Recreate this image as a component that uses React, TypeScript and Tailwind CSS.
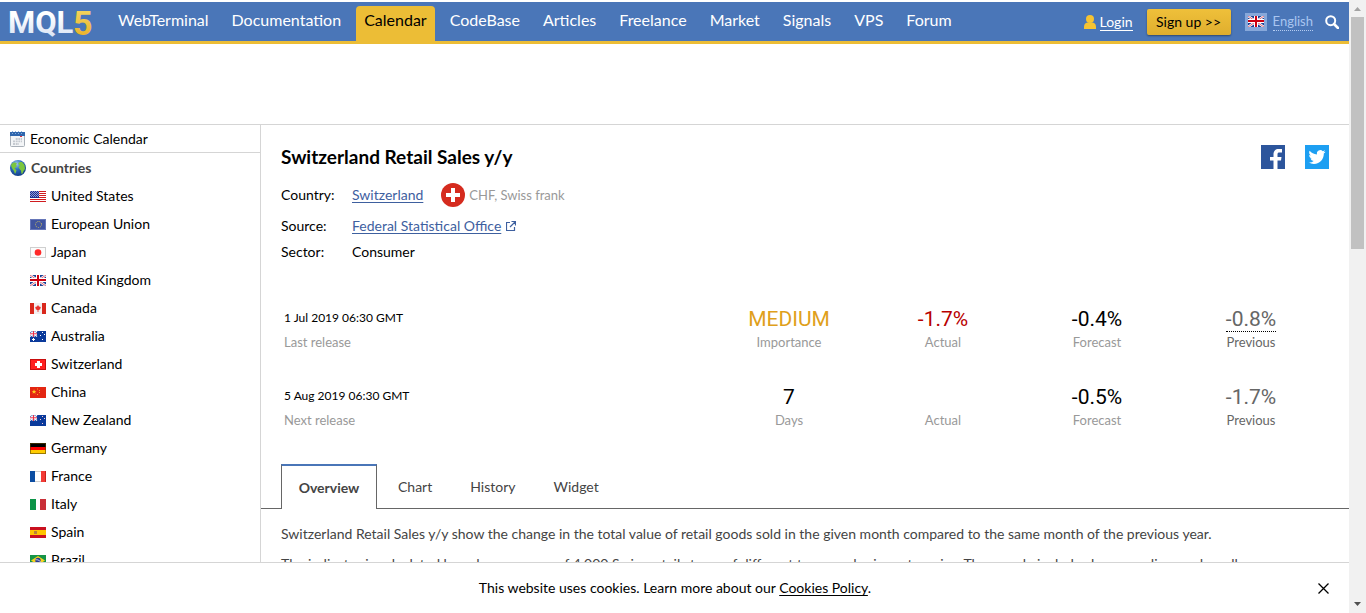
import type { ReactNode } from "react";

function UnionJack() {
  return (
    <>
      <rect width="16" height="11" fill="#1c3f94" />
      <path d="M0 0L16 11M16 0L0 11" stroke="#fff" strokeWidth="2.4" />
      <path d="M0 0L16 11M16 0L0 11" stroke="#d8283a" strokeWidth=".7" />
      <path d="M6 0h4v11H6zM0 3h16v4H0z" fill="#fff" />
      <path d="M7 0h2v11H7zM0 4h16v2H0z" fill="#cc0011" />
    </>
  );
}

function SouthernFlag({ star }: { star: string }) {
  return (
    <>
      <rect width="16" height="11" fill="#0a3a9b" />
      <path d="M0 0L7 5.5M7 0L0 5.5" stroke="#fff" strokeWidth="1.2" />
      <path d="M3.5 0V6M0 2.8H7" stroke="#fff" strokeWidth="2.2" />
      <path d="M3.5 0V6M0 2.8H7" stroke="#e8304a" strokeWidth="1" />
      <path d="M12 1h1v1h-1zM10 4h1v1h-1zM14 3h1v1h-1zM12 8h1v1h-1z" fill={star} />
      {star === "#ffffff" && <path d="M3 7h1v1h1v1h-1v1h-1v-1h-1v-1h1z" fill="#fff" />}
    </>
  );
}

const flags: Record<string, ReactNode> = {
  "United States": (
    <>
      <rect width="16" height="11" fill="#fff" />
      <path d="M0 .5H16M0 2.5H16M0 4.5H16M0 6.5H16M0 8.5H16M0 10.5H16" stroke="#d01c1f" />
      <rect width="9" height="7" fill="#1d2f8f" />
      <path d="M0 .5H9M1 1.5H9M0 2.5H9M1 3.5H9M0 4.5H9M1 5.5H9" stroke="#8f9ad6" strokeDasharray="1 1" />
    </>
  ),
  "European Union": (
    <>
      <rect width="16" height="11" fill="#40549f" />
      <rect x=".5" y=".5" width="15" height="10" fill="none" stroke="#6676b8" />
      <circle cx="8.5" cy="5.5" r="3" fill="none" stroke="#d8c85a" strokeDasharray="1 1.1" />
    </>
  ),
  Japan: (
    <>
      <rect x=".5" y=".5" width="15" height="10" fill="#fcfcfc" stroke="#cfcfcf" />
      <circle cx="8" cy="5.5" r="3.3" fill="#ff2a2a" />
    </>
  ),
  "United Kingdom": <UnionJack />,
  Canada: (
    <>
      <rect width="16" height="11" fill="#f3f0f0" />
      <path d="M0 0H4V11H0zM12 0H16V11H12z" fill="#d9281c" />
      <path d="M8 2l1 1.5 1.8.5-.6 2.2L8.4 7.2V9h-.8V7.2L5.8 6.2 5.2 4 7 3.5z" fill="#e8322d" />
    </>
  ),
  Australia: <SouthernFlag star="#ffffff" />,
  Switzerland: (
    <>
      <rect x=".5" y=".5" width="15" height="10" fill="#ff2020" stroke="#c80d0d" />
      <path d="M7 2h3v2h2v3h-2v2h-3v-2h-2v-3h2z" fill="#fff" />
    </>
  ),
  China: (
    <>
      <rect width="16" height="11" fill="#e32612" />
      <path d="M4 2.3L4.7 4h1.6L5.1 5l.5 1.7L4 5.7 2.5 6.7 3 5 1.8 4h1.6z" fill="#ffc81e" />
      <path d="M7 1.5h1v1h-1zM9 3h1v1h-1zM9 5h1v1h-1zM7 7h1v1h-1z" fill="#f6a61c" />
    </>
  ),
  "New Zealand": <SouthernFlag star="#ffc9d0" />,
  Germany: (
    <>
      <rect width="16" height="4" fill="#000" />
      <rect y="4" width="16" height="3" fill="#fb0000" />
      <rect y="7" width="16" height="4" fill="#ffcc00" />
      <rect x=".5" y=".5" width="15" height="10" fill="none" stroke="#5a4200" strokeOpacity=".6" />
    </>
  ),
  France: (
    <>
      <rect width="16" height="11" fill="#fff" />
      <path d="M5 .5H11M5 10.5H11" stroke="#cfcfcf" />
      <rect width="5" height="11" fill="#0c4da2" />
      <rect x="11" width="5" height="11" fill="#f23a35" />
      <path d="M15.5 0V11" stroke="#c8211d" />
    </>
  ),
  Italy: (
    <>
      <rect width="16" height="11" fill="#fff" />
      <rect width="6" height="11" fill="#0c9447" />
      <rect x="10" width="6" height="11" fill="#c92f38" />
    </>
  ),
  Spain: (
    <>
      <rect width="16" height="11" fill="#c9101f" />
      <rect y="3" width="16" height="5" fill="#ffc400" />
      <path d="M4 4h3v3h-3z" fill="#b7803a" />
    </>
  ),
  Brazil: (
    <>
      <rect width="16" height="11" fill="#159447" />
      <path d="M8 1L15 5.5 8 10 1 5.5z" fill="#f8d21c" />
      <circle cx="8" cy="5.5" r="2.7" fill="#2b3a8c" />
      <path d="M5.5 4.7Q8 4.2 10.5 6.5" fill="none" stroke="#fff" strokeWidth=".7" />
    </>
  ),
};

function Flag({ name }: { name: string }) {
  return (
    <svg viewBox="0 0 16 11" className="h-[11px] w-4 shrink-0" aria-hidden="true">
      {flags[name]}
    </svg>
  );
}

function Logo() {
  return (
    <svg viewBox="0 0 84 39" className="h-[39px] w-[84px] overflow-visible" role="img" aria-label="MQL5">
      <defs>
        <linearGradient id="silver" x1="0" y1="0" x2="0" y2="1">
          <stop offset=".3" stopColor="#ffffff" />
          <stop offset="1" stopColor="#d3dff2" />
        </linearGradient>
        <linearGradient id="gold" x1="0" y1="0" x2="0" y2="1">
          <stop offset=".2" stopColor="#f3d35c" />
          <stop offset="1" stopColor="#e9a91c" />
        </linearGradient>
      </defs>
      <g fontFamily="Roboto, sans-serif" fontWeight="700">
        <text x="-1" y="31" fill="url(#silver)" fontSize="31">
          MQL
        </text>
        <text x="64" y="33" fill="url(#gold)" fontSize="34">
          5
        </text>
      </g>
    </svg>
  );
}

const navItems = [
  "WebTerminal",
  "Documentation",
  "Calendar",
  "CodeBase",
  "Articles",
  "Freelance",
  "Market",
  "Signals",
  "VPS",
  "Forum",
];

function Header() {
  return (
    <header className="mt-0.5 flex h-[42px] shrink-0 items-stretch border-b-[3px] border-[#ecbd36] bg-[#4a76b8]">
      <a href="#home" className="ml-[9px] flex items-center">
        <Logo />
      </a>
      <nav className="flex items-end gap-[7px] pl-[17px]">
        {navItems.map((item) => (
          <a
            key={item}
            href={`#${item}`}
            className={
              item === "Calendar"
                ? "h-[35px] rounded-t-sm bg-[#ecbd36] px-2 text-base leading-7 text-black"
                : "h-[35px] px-2 text-base leading-7 text-white"
            }
          >
            {item}
          </a>
        ))}
      </nav>
      <div className="ml-auto flex items-center pr-[10px] text-sm">
        <svg viewBox="0 0 12 14" className="mr-1 h-[14px] w-3 fill-[#f7c331]" aria-hidden="true">
          <circle cx="6" cy="4" r="4" />
          <path d="M0 14v-2.5C0 9 2 7.5 4 7.5h4c2 0 4 1.5 4 4V14z" />
        </svg>
        <a href="#login" className="border-b border-white leading-[17px] text-white">
          Login
        </a>
        <button className="mx-[14px] h-[26px] w-[84px] rounded-xs bg-linear-to-b from-[#efc03a] to-[#dfae2e] text-black shadow-[0_1px_2px_rgba(0,0,0,0.4)]">
          Sign up &gt;&gt;
        </button>
        <span className="mr-[6px] flex h-[18px] w-[22px] items-center justify-center bg-[#87a8da]">
          <Flag name="United Kingdom" />
        </span>
        <button className="border-b border-dotted border-[#b5cdf2] text-[13px] leading-[17px] text-[#a9c5f0]">
          English
        </button>
        <button aria-label="Search" className="ml-[12px]">
          <svg viewBox="0 0 14 14" className="size-[14px] fill-none stroke-white" aria-hidden="true">
            <circle cx="5.7" cy="5.7" r="4.5" strokeWidth="2" />
            <path d="M9 9l4 4" strokeWidth="2.6" strokeLinecap="round" />
          </svg>
        </button>
      </div>
    </header>
  );
}

function CalendarIcon() {
  return (
    <svg viewBox="0 0 15 16" className="h-4 w-[15px]" aria-hidden="true">
      <rect x=".5" y="2.5" width="14" height="13" rx="1" fill="#f3f5f7" stroke="#a9b0b8" />
      <path d="M0 1h15v4H0z" fill="#2f66ad" />
      <path d="M2.5 0V3M5.5 0V3M8.5 0V3M11.5 0V3" stroke="#8ab0de" strokeDasharray="1 1" />
      <rect x="10" y="5" width="2" height="1" fill="#e03040" />
      <path d="M5 7h7v2h-7zM3 9.5h9v1.7h-9zM3 12h6v2h-6z" fill="#c5cad0" />
      <path d="M5.5 7v7M8 7v7M10.5 7v5" stroke="#f3f5f7" strokeWidth=".7" />
    </svg>
  );
}

function GlobeIcon() {
  return (
    <svg viewBox="0 0 16 16" className="size-4" aria-hidden="true">
      <defs>
        <radialGradient id="sea" cx=".4" cy=".25" r=".75">
          <stop offset="0" stopColor="#a6cdee" />
          <stop offset=".45" stopColor="#2f70c0" />
          <stop offset="1" stopColor="#123e88" />
        </radialGradient>
      </defs>
      <circle cx="8" cy="8" r="8" fill="url(#sea)" />
      <path
        d="M1 5C2 3 3.500 2.500 5 2.500L7 3.500 6 5 7 6 5.500 7.500 4.500 8.500 6.500 10 6 12 5 14 4 11 2.500 9 1.500 7zM8 4l1.500-2L12 2l2.500 3 .5 4-1.500 2-1 2.500L11.500 14 11 10.500 9.500 9 8.500 7 10 5.500z"
        fill="#7cc63e"
      />
    </svg>
  );
}

function Sidebar() {
  return (
    <aside className="w-[261px] shrink-0 border-r border-[#d5d5d5] text-sm text-black">
      <a href="#calendar" className="flex h-7 items-center gap-[5px] border-b border-[#d5d5d5] pl-[10px]">
        <CalendarIcon />
        Economic Calendar
      </a>
      <h2 className="flex h-[29px] items-center gap-[5px] pl-[10px] font-bold text-[#444]">
        <GlobeIcon />
        Countries
      </h2>
      <ul>
        {Object.keys(flags).map((name) => (
          <li key={name}>
            <a href={`#${name}`} className="flex h-7 items-center gap-[5px] pl-[30px]">
              <Flag name={name} />
              {name}
            </a>
          </li>
        ))}
      </ul>
    </aside>
  );
}

function SocialLinks() {
  return (
    <div className="flex gap-5">
      <a href="#facebook" aria-label="Share on Facebook">
        <svg viewBox="0 0 24 24" className="size-6" aria-hidden="true">
          <rect width="24" height="24" fill="#2c559c" />
          <path
            d="M12.5 24v-8.5H9V12h3.5V9.5C12.5 6 14.5 4 17.5 4H21v3.5h-2.5C17 7.5 16.5 8 16.5 9.5V12h4l-.5 3.5h-3.5V24z"
            fill="#fff"
          />
        </svg>
      </a>
      <a href="#twitter" aria-label="Share on Twitter">
        <svg viewBox="0 0 24 24" className="size-6" aria-hidden="true">
          <rect width="24" height="24" fill="#1d9ff2" />
          <g transform="translate(3.5 3.5) scale(.71)">
            <path
              d="M23.95 4.57a10 10 0 01-2.82.77 4.96 4.96 0 002.16-2.72c-.95.55-2 .95-3.13 1.18a4.92 4.92 0 00-8.38 4.48C7.69 8.09 4.07 6.13 1.64 3.16a4.82 4.82 0 00-.67 2.48c0 1.71.87 3.21 2.19 4.1a4.9 4.9 0 01-2.23-.62v.06a4.92 4.92 0 003.95 4.83 5 5 0 01-2.21.08 4.94 4.94 0 004.6 3.42A9.87 9.87 0 010 19.54a14 14 0 007.55 2.21c9.05 0 14-7.5 14-13.98 0-.21 0-.42-.02-.63a9.94 9.94 0 002.46-2.55z"
              fill="#fff"
            />
          </g>
        </svg>
      </a>
    </div>
  );
}

type Cell = { value: string; label: string; tone: string; labelTone: string; dotted?: boolean };

const lastRelease: Cell[] = [
  { value: "MEDIUM", label: "Importance", tone: "text-[#dfa01b]", labelTone: "text-[#999]" },
  { value: "-1.7%", label: "Actual", tone: "text-[#b80000]", labelTone: "text-[#999]" },
  { value: "-0.4%", label: "Forecast", tone: "text-black", labelTone: "text-[#999]" },
  { value: "-0.8%", label: "Previous", tone: "text-[#666]", labelTone: "text-[#666]", dotted: true },
];

const nextRelease: Cell[] = [
  { value: "7", label: "Days", tone: "text-black", labelTone: "text-[#999]" },
  { value: "", label: "Actual", tone: "text-black", labelTone: "text-[#999]" },
  { value: "-0.5%", label: "Forecast", tone: "text-black", labelTone: "text-[#999]" },
  { value: "-1.7%", label: "Previous", tone: "text-[#666]", labelTone: "text-[#666]" },
];

function Release({ date, label, cells }: { date: string; label: string; cells: Cell[] }) {
  return (
    <div className="grid h-[78px] grid-cols-[1fr_repeat(4,154px)]">
      <div className="pl-[3px]">
        <div className="h-7 text-xs leading-7 text-black">{date}</div>
        <div className="text-[13px] leading-5 text-[#999]">{label}</div>
      </div>
      {cells.map((cell) => (
        <div key={cell.label} className="text-center">
          <div className={`h-7 font-[Roboto,sans-serif] text-[21px] leading-[30px] ${cell.tone}`}>
            <span className={cell.dotted ? "inline-block h-7 border-b border-dotted border-black" : ""}>
              {cell.value}
            </span>
          </div>
          <div className={`text-[13px] leading-5 ${cell.labelTone}`}>{cell.label}</div>
        </div>
      ))}
    </div>
  );
}

function Details() {
  return (
    <dl className="grid grid-cols-[71px_1fr] text-sm text-black">
      <dt className="leading-[34px]">Country:</dt>
      <dd className="flex h-[34px] items-center">
        <a href="#switzerland" className="text-[#3e609f] underline underline-offset-2">
          Switzerland
        </a>
        <svg viewBox="0 0 24 24" className="mr-1 ml-[18px] size-6" aria-hidden="true">
          <circle cx="12" cy="12" r="12" fill="#d52b1e" />
          <path d="M10 5h4v5h5v4h-5v5h-4v-5H5v-4h5z" fill="#fff" />
        </svg>
        <span className="text-[13px] text-[#999]">CHF, Swiss frank</span>
      </dd>
      <dt className="leading-[27px]">Source:</dt>
      <dd className="flex h-[27px] items-center">
        <a href="#source" className="flex items-center gap-[5px] text-[#3e609f]">
          <span className="underline underline-offset-2">Federal Statistical Office</span>
          <svg viewBox="0 0 10 10" className="size-[10px] fill-none stroke-[#3e609f]" aria-hidden="true">
            <path d="M4 1.5H.5V9.5H8.5V6M5.5 .5H9.5V4.5M9.5 .5L4 6" strokeWidth="1.2" />
          </svg>
        </a>
      </dd>
      <dt className="leading-[26px]">Sector:</dt>
      <dd className="leading-[26px]">Consumer</dd>
    </dl>
  );
}

function Tabs() {
  return (
    <div role="tablist" className="flex h-[45px] shrink-0 text-sm text-[#444]">
      <span className="w-5 border-b border-[#666]" />
      <button
        role="tab"
        aria-selected="true"
        className="w-24 border-x border-t-2 border-x-[#666] border-t-[#4a76b8] font-bold"
      >
        Overview
      </button>
      <div className="flex grow gap-[38px] border-b border-[#666] pt-[2px] pl-[21px]">
        <button role="tab" aria-selected="false">Chart</button>
        <button role="tab" aria-selected="false">History</button>
        <button role="tab" aria-selected="false">Widget</button>
      </div>
    </div>
  );
}

function Content() {
  return (
    <main className="min-w-0 grow">
      <div className="flex items-start justify-between pt-5 pr-5 pl-5">
        <div>
          <h1 className="mb-[9px] text-[19px] leading-6 font-bold text-black">Switzerland Retail Sales y/y</h1>
          <Details />
        </div>
        <SocialLinks />
      </div>
      <div className="mt-[39px] pr-[21px] pl-5">
        <Release date="1 Jul 2019 06:30 GMT" label="Last release" cells={lastRelease} />
        <Release date="5 Aug 2019 06:30 GMT" label="Next release" cells={nextRelease} />
      </div>
      <div className="pt-1">
        <Tabs />
      </div>
      <div className="pt-[14px] pr-5 pl-5 text-sm text-[#444]">
        <p className="mb-2 leading-[22px]">
          Switzerland Retail Sales y/y show the change in the total value of retail goods sold in the given month
          compared to the same month of the previous year.
        </p>
        <p className="leading-[22px]">
          The indicator is calculated based on a survey of 4,000 Swiss retail stores of different types and price
          categories. The sample includes large, medium and small
        </p>
      </div>
    </main>
  );
}

function CookieBar() {
  return (
    <div className="flex h-[51px] shrink-0 items-center border-t border-[#d5d5d5] bg-white pr-5 text-sm text-black">
      <p className="grow pl-8 text-center">
        This website uses cookies. Learn more about our{" "}
        <a href="#cookies" className="underline underline-offset-2">
          Cookies Policy
        </a>
        .
      </p>
      <button aria-label="Close">
        <svg viewBox="0 0 11 11" className="size-[11px] stroke-black" aria-hidden="true">
          <path d="M.5 .5L10.5 10.5M10.5 .5L.5 10.5" strokeWidth="1.3" />
        </svg>
      </button>
    </div>
  );
}

function ScrollTrack() {
  return (
    <div className="flex w-[17px] shrink-0 flex-col items-center bg-[#f1f1f1]" aria-hidden="true">
      <svg viewBox="0 0 17 17" className="size-[17px]">
        <path d="M5 11L8.5 7L12 11z" fill="#a3a3a3" />
      </svg>
      <div className="h-[232px] w-[13px] bg-[#c1c1c1]" />
      <svg viewBox="0 0 17 17" className="mt-auto size-[17px]">
        <path d="M5 6L8.5 10L12 6z" fill="#505050" />
      </svg>
    </div>
  );
}

export default function App() {
  return (
    <div className="flex h-screen overflow-hidden bg-white font-[Lato,sans-serif]">
      <div className="flex min-w-0 grow flex-col">
        <Header />
        <div className="h-20 shrink-0" />
        <div className="flex min-h-0 grow overflow-hidden border-t border-[#d5d5d5]">
          <Sidebar />
          <Content />
        </div>
        <CookieBar />
      </div>
      <ScrollTrack />
    </div>
  );
}
